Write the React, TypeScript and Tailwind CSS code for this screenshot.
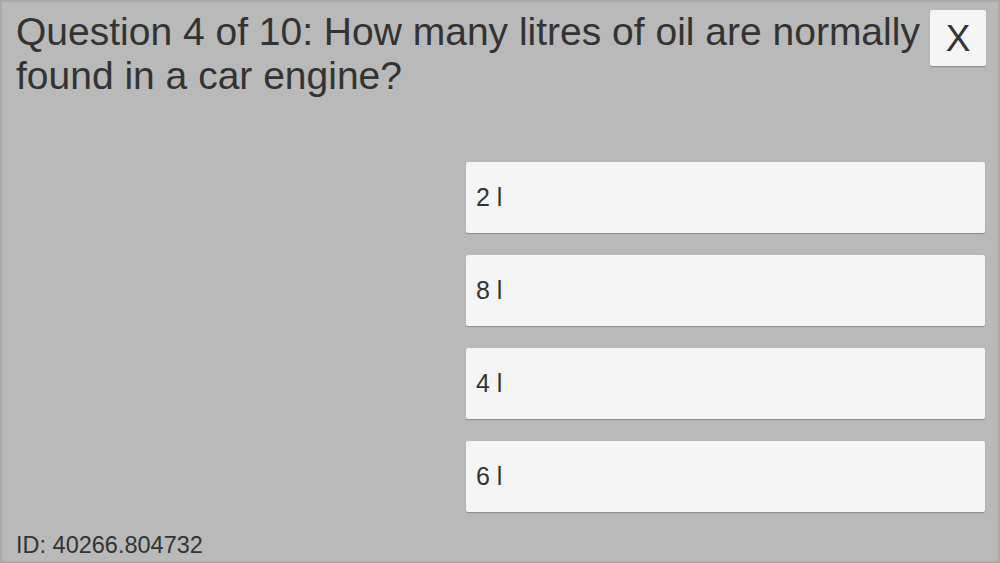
import React from "react";

const answers = ["2 l", "8 l", "4 l", "6 l"];

export default function App() {
  return (
    <div
      className="w-[1000px] h-[563px] bg-[#b9b9b9] border-2 border-[#a9a9a9] flex flex-col text-[#333333] overflow-hidden"
      style={{ fontFamily: '"Liberation Sans", Arial, sans-serif' }}
    >
      <div className="flex items-start pl-[14px] pr-[12px] pt-[8px]">
        <div className="flex-1 text-[39px] leading-[44px]">
          Question 4 of 10: How many litres of oil are normally found in a car engine?
        </div>
        <button className="w-[56px] h-[56px] bg-[#f5f5f5] rounded-[2px] shadow-[0_1px_1px_rgba(0,0,0,0.25)] text-[37px] leading-none flex items-center justify-center text-[#333]">
          X
        </button>
      </div>
      <div className="flex-1 flex flex-col items-end pr-[13px] pt-[64px] gap-[22px]">
        {answers.map((a) => (
          <div
            key={a}
            className="w-[519px] h-[71px] bg-[#f5f5f5] rounded-[2px] shadow-[0_1px_1px_rgba(0,0,0,0.25)] flex items-center pl-[10px] text-[25px]"
          >
            {a}
          </div>
        ))}
      </div>
      <div className="pl-[14px] pb-[2px] text-[23.5px] leading-[28px]">ID: 40266.804732</div>
    </div>
  );
}
